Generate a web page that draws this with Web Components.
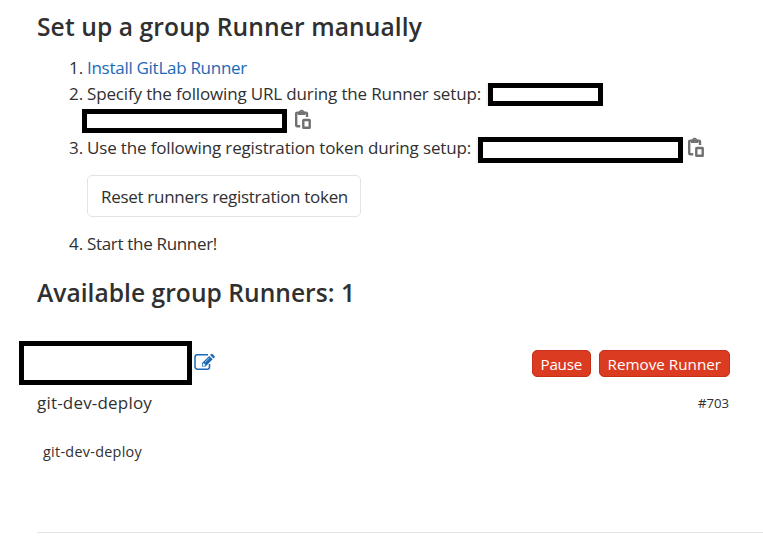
<!DOCTYPE html>
<html lang="en">
<head>
<meta charset="utf-8">
<title>Group Runners</title>
<style>
html,body{margin:0;background:#fff}
body{height:549px;overflow:hidden;font-family:"Open Sans","Noto Sans",sans-serif;font-weight:400;color:#303030}
</style>
</head>
<body>
<runner-page></runner-page>
<script>
const define = (name, html, init) => customElements.define(name, class extends HTMLElement {
  constructor() {
    super();
    this.attachShadow({mode: 'open'}).innerHTML = html;
  }
  connectedCallback() { if (init) init(this); }
});

/* A line of text whose tracking is tuned to a given advance width. */
define('ui-text', `<style>
:host{display:inline-block;white-space:pre;line-height:26px;height:26px;font-size:17px;flex:none}
span{display:inline-block}
</style><span></span>`, el => {
  const span = el.shadowRoot.querySelector('span');
  span.textContent = el.getAttribute('text');
  if (el.hasAttribute('size')) el.style.fontSize = el.getAttribute('size') + 'px';
  const want = +el.getAttribute('width');
  if (want) {
    const have = span.getBoundingClientRect().width;
    span.style.letterSpacing = (want - have) / span.textContent.length + 'px';
    el.style.width = want + 'px';
  }
});

define('blank-field', `<style>
:host{display:block;box-sizing:border-box;border:5px solid #000;background:#fff;flex:none}
:host([code]){box-shadow:-2px 0 0 #f3f3f3}
</style>`);

define('copy-icon', `<style>:host{display:block;width:16px;height:20px;flex:none}svg{display:block}</style>
<svg width="16" height="20" viewBox="0 0 16 20" fill="none" stroke="#707070">
<path d="M5.2 17.2H2.2a1 1 0 0 1-1-1V4.6a1 1 0 0 1 1-1H11a1 1 0 0 1 1 1V8" stroke-width="2.4"/>
<path fill="#707070" stroke="none" fill-rule="evenodd" d="M3 6V3.4L4.3 2.3a2.6 2.6 0 0 1 4.7 0L10.3 3.4V6zM6.65 2.4a1 1 0 1 0 0 2 1 1 0 0 0 0-2z"/>
<rect x="8.3" y="11" width="6.4" height="7.8" rx=".3" stroke-width="2.4"/></svg>`);

define('edit-icon', `<style>:host{display:block;width:21px;height:18px;flex:none}svg{display:block}</style>
<svg width="21" height="18" viewBox="0 0 21 18">
<path d="M14 1.7H3.5A2.5 2.5 0 0 0 1 4.2v9.6a2.5 2.5 0 0 0 2.5 2.5H13a2.5 2.5 0 0 0 2.5-2.5V11" fill="none" stroke="#1b69b6" stroke-width="1.5"/>
<path d="M8 13.6V10L15.3 2.9 18.7 6.2 11.5 13.6z" fill="#1b69b6"/>
<path d="M16.1 2.1l1-1q.8-.6 1.6.1l1.8 1.8q.6.8 0 1.5l-1 1z" fill="#1b69b6"/>
<path d="M9 10.9v1.7h1.7l.5-.7-1.5-1.5zM11 9.2l4.3-4.2" fill="#fff" stroke="#fff" stroke-width=".6"/></svg>`);

define('outline-button', `<style>:host{display:flex;box-sizing:border-box;width:274px;height:42px;padding:8px 0 0 13px;border:1px solid #e3e3e3;border-radius:5px;background:#fff}</style><slot></slot>`);

define('danger-button', `<style>:host{display:flex;box-sizing:border-box;height:27px;padding:0 8px 0 7.5px;border:1px solid #c62f19;border-radius:5px;background:#db3b21;color:#fff;flex:none}</style><slot></slot>`);

define('setup-step', `<style>
:host{display:flex;height:26px}
.n{width:18px;margin-left:69px;flex:none}
</style><div class="n"><ui-text width="14"></ui-text></div><slot></slot>`, el => {
  const t = el.shadowRoot.querySelector('ui-text');
  t.setAttribute('text', el.getAttribute('n') + '.');
  t.replaceWith(t.cloneNode());
});

define('runner-page', `<style>
:host{display:flow-root;width:763px;height:549px}
.title{display:flex;font-weight:600;height:32px;padding-left:37px}
.title ui-text{font-weight:600}
.cont{display:flex;height:28px;padding:2px 0 0 82px;box-sizing:border-box}
.runner{display:flex;padding-left:19px;height:44px}
.actions{display:flex;gap:8px;margin:9px 33px 0 auto}
.meta{display:flex;justify-content:space-between;padding:0 34px 0 37px}
hr{margin:67px 0 0 37px;border:0;height:1px;background:#e3e3e3}
</style>
<div class="title" style="margin-top:14px"><ui-text text="Set up a group Runner manually" size="24.6" width="385"></ui-text></div>
<div style="margin-top:9px">
<setup-step n="1"><ui-text text="Install GitLab Runner" width="160" style="color:#1b69b6"></ui-text></setup-step>
<setup-step n="2"><ui-text text="Specify the following URL during the Runner setup:" width="394"></ui-text><blank-field code style="width:115px;height:23px;margin:2px 0 0 7px"></blank-field></setup-step>
<div class="cont"><blank-field style="width:205px;height:24px"></blank-field><copy-icon style="margin-left:8px"></copy-icon></div>
<setup-step n="3"><ui-text text="Use the following registration token during setup:" width="384"></ui-text><blank-field code style="width:205px;height:26px;margin:2px 0 0 7px"></blank-field><copy-icon style="margin:2px 0 0 5px"></copy-icon></setup-step>
<div style="padding:14px 0 14px 87px"><outline-button><ui-text text="Reset runners registration token" width="247"></ui-text></outline-button></div>
<setup-step n="4"><ui-text text="Start the Runner!" width="130"></ui-text></setup-step>
</div>
<div class="title" style="margin-top:23px"><ui-text text="Available group Runners: 1" size="24.6" width="318"></ui-text></div>
<div class="runner" style="margin-top:29px"><blank-field style="width:173px;height:44px"></blank-field><edit-icon style="margin:12px 0 0 2px"></edit-icon>
<div class="actions"><danger-button><ui-text text="Pause" size="15.2" width="41.5"></ui-text></danger-button><danger-button><ui-text text="Remove Runner" size="15.2" width="113.5"></ui-text></danger-button></div></div>
<div class="meta" style="margin-top:5px"><ui-text text="git-dev-deploy" width="115"></ui-text><ui-text text="#703" size="13.2" width="31"></ui-text></div>
<div style="padding:23px 0 0 43px"><ui-text text="git-dev-deploy" size="14.4" width="99"></ui-text></div>
<hr>`);
</script>
</body>
</html>
